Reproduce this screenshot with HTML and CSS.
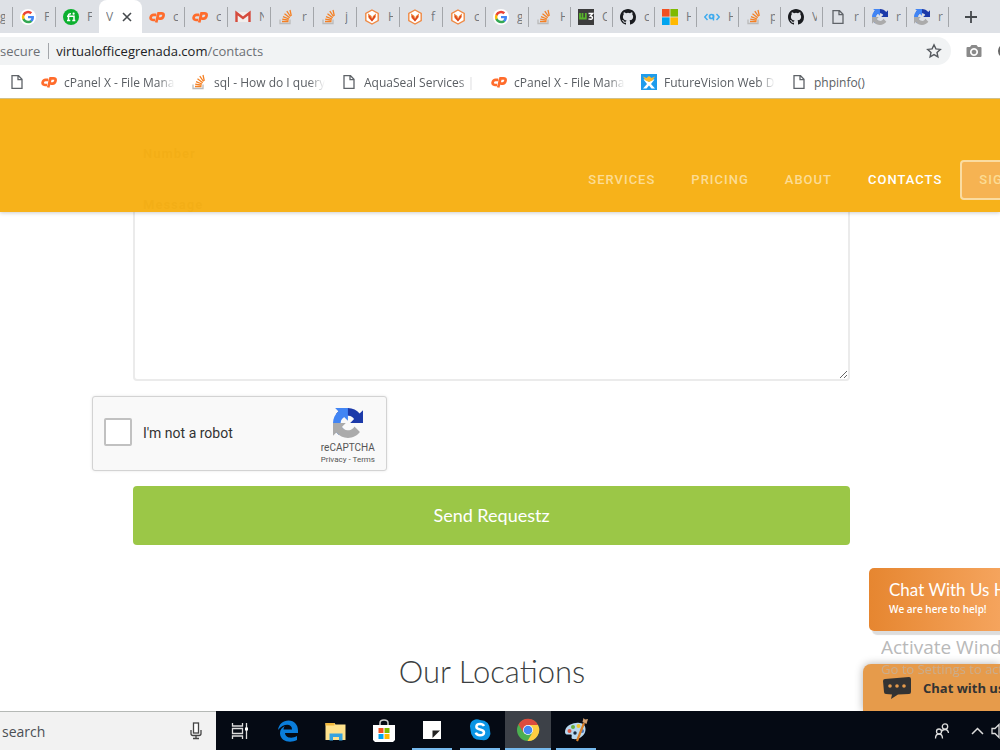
FILE: index.html
```html
<!DOCTYPE html>
<html lang="en">
<head>
<meta charset="utf-8">
<title>Contacts</title>
<link rel="stylesheet" href="styles.css">
</head>
<body>
<svg class="sprite" aria-hidden="true">
  <symbol id="google" viewBox="0 0 18 18"><circle cx="9" cy="9" r="9" fill="#fff"/><g transform="translate(2 2) scale(.78)"><path fill="#4285f4" d="M17.6 9.2c0-.6-.1-1.300-.2-1.800H9v3.500h4.800a4.100 4.100 0 0 1-1.800 2.700v2.300h2.900c1.700-1.600 2.700-3.900 2.700-6.700z"/><path fill="#34a853" d="M9 18c2.400 0 4.500-.8 6-2.200l-3-2.300c-.8.600-1.800.9-3 .9-2.300 0-4.300-1.600-5-3.700H1V13a9 9 0 0 0 8 5z"/><path fill="#fbbc05" d="M4 10.700a5.400 5.400 0 0 1 0-3.400V5H1a9 9 0 0 0 0 8z"/><path fill="#ea4335" d="M9 3.600c1.300 0 2.500.5 3.400 1.300L15 2.300A9 9 0 0 0 1 5l3 2.300c.7-2.100 2.700-3.700 5-3.700z"/></g></symbol>
  <symbol id="fi" viewBox="0 0 16 16"><circle cx="8" cy="8" r="8" fill="#0cb02f"/><path d="M5.500 11.500V6.300q0-1.700 2.500-1.500M4 7.300h7v4.200M4 11.500h3.300M9.300 11.500h3" fill="none" stroke="#fff" stroke-width="1.500"/><circle cx="10.600" cy="4.700" r="1.100" fill="#fff"/></symbol>
  <symbol id="cp" viewBox="0 0 16 16"><path d="M7.300 5.800H4.600Q2.300 5.800 1.700 8.300T4 11H6M7.200 13.500L9.500 4.300h2.900q2.700 0 2.100 2.600t-2.900 2.700H9.500" fill="none" stroke="#ff6c2c" stroke-width="2.700"/></symbol>
  <symbol id="gmail" viewBox="0 0 16 16"><path d="M1 3h14v10H1z" fill="#f2eeec"/><path d="M1.500 13V4L8 9l6.500-5v9" fill="none" stroke="#d54b3d" stroke-width="2.400"/></symbol>
  <symbol id="so" viewBox="0 0 16 16"><path d="M2 10.500v4h10v-4" fill="none" stroke="#bbb" stroke-width="1.300"/><path d="M4 12.500h6.500M4.200 10.200l6.400 1M5 7.600l6 2.400M6.500 4.800l5.200 3.900M8.800 2.200l3.700 5.300M12 1l1.300 5.800" stroke="#f48024" stroke-width="1.300"/></symbol>
  <symbol id="hex" viewBox="0 0 16 16"><path d="M8 1l6.200 3.500v7L8 15l-6.200-3.500v-7z" fill="#fff" stroke="#ef8a45" stroke-width="1.400"/><path d="M4 4.500L7.500 7 8 9.500 9 7l3-2.500-.5 4L8 12.500 4.500 9z" fill="#ee7b2c"/><path d="M5 7l3 4.500L11 7" fill="none" stroke="#d83d25" stroke-width="1.200"/></symbol>
  <symbol id="w3" viewBox="0 0 16 16"><path d="M0 0h16v16H0z" fill="#3c3c3c"/><path d="M2 4v5.500h2.500V4M4.500 9.500H7.800V4" fill="none" stroke="#59b52c" stroke-width="1.800"/><path d="M10.500 4.500h4L12.300 7q2.500.2 2 2.200-.7 1.800-3.800.7" fill="none" stroke="#fff" stroke-width="1.500"/></symbol>
  <symbol id="github" viewBox="0 0 16 16"><path fill="#191b1f" d="M8 0C3.580 0 0 3.580 0 8c0 3.540 2.290 6.530 5.470 7.590.4.070.55-.17.55-.38 0-.19-.01-.82-.01-1.490-2.010.37-2.530-.49-2.690-.94-.09-.23-.48-.94-.82-1.130-.28-.15-.68-.52-.01-.53.63-.01 1.080.58 1.230.82.72 1.210 1.870.87 2.330.66.07-.52.28-.87.51-1.070-1.780-.2-3.640-.89-3.640-3.950 0-.87.31-1.590.82-2.150-.08-.2-.36-1.020.08-2.120 0 0 .67-.21 2.200.82a7.600 7.600 0 0 1 4 0c1.530-1.040 2.200-.82 2.200-.82.44 1.100.16 1.920.08 2.120.51.56.82 1.270.82 2.150 0 3.070-1.870 3.750-3.650 3.950.29.25.54.73.54 1.480 0 1.070-.01 1.930-.01 2.200 0 .21.15.46.55.38A8 8 0 0 0 16 8c0-4.420-3.580-8-8-8z"/></symbol>
  <symbol id="ms" viewBox="0 0 16 16"><path fill="#f25022" d="M0 0h7.600v7.600H0z"/><path fill="#7fba00" d="M8.400 0H16v7.600H8.400z"/><path fill="#00a4ef" d="M0 8.400h7.600V16H0z"/><path fill="#ffb900" d="M8.400 8.400H16V16H8.400z"/></symbol>
  <symbol id="code" viewBox="0 0 16 16"><path d="M3.500 5L.8 8l2.700 3M12.500 5l2.700 3-2.700 3M9.500 5.500v6" fill="none" stroke="#3fabee" stroke-width="1.400"/><circle cx="7.500" cy="7.500" r="2" fill="none" stroke="#3fabee" stroke-width="1.700"/></symbol>
  <symbol id="doc" viewBox="0 0 16 16"><path d="M3 1.700h6.500l3.500 3.500v9.100H3zM9 1.700v4h4" fill="none" stroke="#5f6368" stroke-width="1.300"/></symbol>
  <symbol id="captcha" viewBox="0 0 64 64"><path fill="#1c3aa9" d="M64 31.955l-.033-1.370V4.687l-7.160 7.160C50.948 4.674 42.033.093 32.050.093c-10.400 0-19.622 4.960-25.458 12.640l11.736 11.860a15.550 15.550 0 0 1 4.754-5.334c2.050-1.600 4.952-2.906 8.968-2.906.485 0 .860.057 1.135.163 4.976.393 9.288 3.140 11.828 7.124l-8.307 8.307L64 31.953"/><path fill="#4285f4" d="M31.862.094l-1.370.033H4.594l7.160 7.160C4.580 13.147 0 22.060 0 32.046c0 10.400 4.960 19.622 12.640 25.458L24.500 45.768a15.550 15.550 0 0 1-5.334-4.754c-1.600-2.050-2.906-4.952-2.906-8.968 0-.485.057-.860.163-1.135.393-4.976 3.140-9.288 7.124-11.828l8.307 8.307L31.860.095"/><path fill="#ababab" d="M.001 32.045l.033 1.370v25.898l7.160-7.160c5.860 7.173 14.774 11.754 24.760 11.754 10.400 0 19.622-4.960 25.458-12.640l-11.736-11.860a15.550 15.550 0 0 1-4.754 5.334c-2.050 1.600-4.952 2.906-8.968 2.906-.485 0-.860-.057-1.135-.163-4.976-.393-9.288-3.140-11.828-7.124l8.307-8.307c-10.522.040-22.400.066-27.295-.005"/></symbol>
  <symbol id="wix" viewBox="0 0 16 16"><path d="M0 0h16v16H0z" fill="#1e9cec"/><path d="M2.500 5.500h3L8 8l2.500-2.500h3L10 10l4 4.500h-3.500L8 11.500l-2.500 3H2L6 10z" fill="#fff"/><path d="M2 2.500l3.500 1.500L8 2l2.500 2L14 2.500l-2.500 4L8 8 4.500 6.500z" fill="#fbb829"/></symbol>
  <symbol id="star" viewBox="0 0 16 16"><path d="M8 1.800l1.900 4.100 4.400.5-3.300 3 .9 4.400L8 11.600l-3.900 2.200.9-4.400-3.300-3 4.400-.5z" fill="none" stroke="#55595e" stroke-width="1.400"/></symbol>
  <symbol id="camera" viewBox="0 0 16 16"><path fill="#8a8a8a" fill-rule="evenodd" d="M5.500 2h5L12 4h2.500q1 0 1 1v8q0 1-1 1h-13q-1 0-1-1V5q0-1 1-1H4zM8 5a4 4 0 1 0 .01 0zM8 6.700a2.300 2.300 0 1 1-.01 0z"/></symbol>
</svg>

<div class="tabs">
  <div class="tab tab-first"><span>g</span></div>
  <div class="tab"><svg><use href="#google"/></svg><span>F</span></div>
  <div class="tab before-active"><svg><use href="#fi"/></svg><span>F</span></div>
  <div class="tab active"><span>V</span><button class="close" aria-label="Close tab"><svg viewBox="0 0 10 10"><path d="M1 1l8 8M9 1L1 9" stroke="#45494d" stroke-width="1.600"/></svg></button></div>
  <div class="tab"><svg><use href="#cp"/></svg><span>c</span></div>
  <div class="tab"><svg><use href="#cp"/></svg><span>c</span></div>
  <div class="tab"><svg><use href="#gmail"/></svg><span>N</span></div>
  <div class="tab"><svg><use href="#so"/></svg><span>r</span></div>
  <div class="tab"><svg><use href="#so"/></svg><span>j</span></div>
  <div class="tab"><svg><use href="#hex"/></svg><span>H</span></div>
  <div class="tab"><svg><use href="#hex"/></svg><span>f</span></div>
  <div class="tab"><svg><use href="#hex"/></svg><span>c</span></div>
  <div class="tab"><svg><use href="#google"/></svg><span>g</span></div>
  <div class="tab slim"><svg><use href="#so"/></svg><span>H</span></div>
  <div class="tab slim"><svg><use href="#w3"/></svg><span>C</span></div>
  <div class="tab slim"><svg><use href="#github"/></svg><span>c</span></div>
  <div class="tab slim"><svg><use href="#ms"/></svg><span>H</span></div>
  <div class="tab slim"><svg><use href="#code"/></svg><span>H</span></div>
  <div class="tab slim"><svg><use href="#so"/></svg><span>p</span></div>
  <div class="tab slim"><svg><use href="#github"/></svg><span>V</span></div>
  <div class="tab slim"><svg><use href="#doc"/></svg><span>r</span></div>
  <div class="tab slim"><svg><use href="#captcha"/></svg><span>r</span></div>
  <div class="tab slim"><svg><use href="#captcha"/></svg><span>r</span></div>
  <button class="new-tab" aria-label="New tab"><svg viewBox="0 0 12 12"><path d="M6 0v12M0 6h12" stroke="#45494d" stroke-width="1.800"/></svg></button>
</div>

<div class="toolbar">
  <div class="omnibox"><span class="secure">secure</span><span class="url"><b>virtualofficegrenada.com</b>/contacts</span><svg class="star"><use href="#star"/></svg></div>
  <svg class="camera"><use href="#camera"/></svg>
  <svg class="ext" viewBox="0 0 16 16"><circle cx="8" cy="8" r="7" fill="#666"/></svg>
</div>

<nav class="bookmarks" aria-label="Bookmarks">
  <a class="bookmark" href="#" aria-label="Page"><svg><use href="#doc"/></svg></a>
  <a class="bookmark" href="#"><svg><use href="#cp"/></svg><span class="fade">cPanel X - File Manag</span></a>
  <a class="bookmark" href="#"><svg><use href="#so"/></svg><span class="fade">sql - How do I query</span></a>
  <a class="bookmark" href="#"><svg><use href="#doc"/></svg><span class="fade">AquaSeal Services | W</span></a>
  <a class="bookmark" href="#"><svg><use href="#cp"/></svg><span class="fade">cPanel X - File Manag</span></a>
  <a class="bookmark" href="#"><svg><use href="#wix"/></svg><span class="fade">FutureVision Web De</span></a>
  <a class="bookmark" href="#"><svg><use href="#doc"/></svg><span>phpinfo()</span></a>
</nav>

<main class="page">
  <header class="site-header">
    <nav class="menu">
      <a href="#">SERVICES</a><a href="#">PRICING</a><a href="#">ABOUT</a><a class="current" href="#">CONTACTS</a><a class="sign" href="#">SIGN UP</a>
    </nav>
  </header>
  <form class="form">
    <input class="field" type="text" placeholder="Number" aria-label="Number">
    <textarea class="field message" placeholder="Message" aria-label="Message"></textarea>
    <div class="captcha">
      <input type="checkbox" id="robot"><label for="robot">I'm not a robot</label>
      <div class="brand"><svg><use href="#captcha"/></svg><span>reCAPTCHA</span><small>Privacy - Terms</small></div>
    </div>
    <button class="send" type="button">Send Requestz</button>
  </form>
  <h2 class="locations">Our Locations</h2>

  <aside class="chat-card"><strong>Chat With Us Here</strong><span>We are here to help!</span></aside>
  <button class="chat-bar" type="button"><svg viewBox="0 0 28 22"><path d="M2 2L26 0q2 0 2 2v13q0 2-2 2l-11 .5L8 22l1-4.500-6-.5q-2 0-2-2L0 4q0-2 2-2z" fill="#333"/><g fill="#e69b4b"><circle cx="7" cy="9" r="1.800"/><circle cx="14" cy="9" r="1.800"/><circle cx="21" cy="9" r="1.800"/></g></svg><span>Chat with us</span></button>
  <div class="watermark"><p>Activate Windows</p><small>Go to Settings to activate</small></div>
</main>

<footer class="taskbar">
  <div class="search"><input type="text" placeholder="search" aria-label="search"><svg viewBox="0 0 12 18"><rect x="3.500" y="1" width="5" height="10" fill="#fff" stroke="#444" stroke-width="1.300"/><path d="M1 8v3.500q0 2 2 2h6q2 0 2-2V8M6 13.500V16M3 16.500h6" fill="none" stroke="#444" stroke-width="1.300"/></svg></div>
  <button class="app" aria-label="Task view"><svg viewBox="0 0 24 24"><path d="M4.500 4v3h10V4M4.500 20v-3h10v3M4.500 9.500h10v5h-10zM18.500 4v16" fill="none" stroke="#ddd" stroke-width="1.300"/><path d="M17 8.500h3v3h-3z" fill="#fff"/></svg></button>
  <button class="app" aria-label="Edge"><svg viewBox="0 0 24 24"><path fill="#0a7ddb" d="M2 11C3 5 7 1.500 12.500 1.500c6 0 9.500 4.500 9.500 10V14H9c.2 5 7 6 12 3v4c-7 3.500-16.500 1.500-17-6.500C3.900 10.500 6 8.500 9 7c-1 1-1.500 2.500-1.500 3.500H16C16 4 7 4.500 2 11z"/></svg></button>
  <button class="app" aria-label="Files"><svg viewBox="0 0 24 24"><path d="M1.500 4h9l1 1.500h10V21h-20z" fill="#ffe28c"/><path d="M1.500 4h9v2.500h-9z" fill="#f2b83b"/><path d="M5.500 21.500v-7h13v7h-3.500v-3.500H9v3.500z" fill="#37a3df"/></svg></button>
  <button class="app" aria-label="Store"><svg viewBox="0 0 24 24"><path d="M8 7V4q0-3 4-3t4 3v3" fill="none" stroke="#ccc" stroke-width="1.500"/><path d="M1 6h22v15l-2 2H3l-2-2z" fill="#fff"/><path fill="#f25022" d="M6.500 9h5v5h-5z"/><path fill="#7fba00" d="M12.500 9h5v5h-5z"/><path fill="#00a4ef" d="M6.500 15h5v5h-5z"/><path fill="#ffb900" d="M12.500 15h5v5h-5z"/></svg></button>
  <button class="app open" aria-label="Notes"><svg viewBox="0 0 24 24"><path d="M3 3h18v18H3z" fill="#fff"/><path d="M12.500 12.500H20l-7.500 7.500z" fill="#222"/></svg></button>
  <button class="app open" aria-label="Skype"><svg viewBox="0 0 24 24"><path d="M7 1.500q3-.5 5 .5 10 .5 10 10.500 1 3-.5 6-3 5-7.500 3.500-11 .5-11.500-10Q0 4 7 1.500z" fill="#0a94e4"/><path d="M16 8q-1-2-4-2-3.600 0-3.600 2.700 0 2 3.600 2.700 4 .8 4 3 0 2.800-4 2.800-3.500 0-4.200-2.500" fill="none" stroke="#fff" stroke-width="2.500"/></svg></button>
  <button class="app open focused" aria-label="Chrome"><svg viewBox="0 0 24 24"><circle cx="12" cy="12" r="11" fill="#4caf50"/><path d="M2.500 6.500A11 11 0 0 1 22 7H12L7.500 14.500z" fill="#dd4b3e"/><path d="M22 7A11 11 0 0 1 11.500 23l5-8.500L12 7z" fill="#fecd42"/><circle cx="12" cy="12" r="5" fill="#fff"/><circle cx="12" cy="12" r="4.300" fill="#4587f3"/></svg></button>
  <button class="app open" aria-label="Paint"><svg viewBox="0 0 24 24"><path d="M12 5c6-1 10 2 9.500 7-.5 6-7 10-12.500 9-3-.5 0-4-2-4.500S1 18 1 14C1 9 6 5.500 12 5z" fill="#b8d8f0"/><circle cx="5.500" cy="13" r="2" fill="#e05a45"/><circle cx="9" cy="9" r="2" fill="#67ae40"/><circle cx="14.500" cy="8" r="2" fill="#f0c62e"/><circle cx="11" cy="15" r="1.700" fill="#182c40"/><circle cx="18" cy="13" r="2" fill="#4d76bd"/><path d="M20 5l-7 18" stroke="#d9802a" stroke-width="2.200"/><path d="M18.500 4l1-4 1.500 1.500L24 1l-1.500 5z" fill="#d4a273"/></svg></button>
  <div class="tray">
    <svg viewBox="0 0 16 16"><g fill="none" stroke="#ddd" stroke-width="1.300"><circle cx="11" cy="3.500" r="2.700"/><circle cx="5" cy="8.500" r="2.500"/><path d="M7.500 8.500q1-2 3.500-2 3 0 3.500 3.500M1.500 15.500q0-4.500 3.500-4.500t3.500 4.500"/></g></svg>
    <svg viewBox="0 0 16 16"><path d="M3 11l5.500-5.500L14 11" fill="none" stroke="#ddd" stroke-width="1.500"/></svg>
    <svg viewBox="0 0 16 16"><path d="M1 5.500h3l4-4v13l-4-4H1z" fill="none" stroke="#ddd" stroke-width="1.300"/></svg>
  </div>
</footer>
</body>
</html>
```
FILE: styles.css
```css
* { box-sizing: border-box; }
body { margin: 0; height: 100vh; display: flex; flex-direction: column; overflow: hidden; background: #fff; font-family: "Open Sans", "Noto Sans", sans-serif; }
button { border: 0; padding: 0; background: none; font: inherit; }
a { text-decoration: none; color: inherit; }
svg { flex: none; width: 16px; height: 16px; display: block; }
.sprite { position: absolute; width: 0; height: 0; }

.tabs { flex: none; height: 33px; display: flex; align-items: center; background: #dee1e6; font-size: 12px; color: #75797e; }
.tab { flex: none; width: 43px; height: 20px; padding-left: 7px; display: flex; align-items: center; gap: 8px; border-right: 1px solid #a3a6aa; overflow: hidden; }
.tab span { width: 5px; overflow: hidden; }
.tab.slim { width: 42px; }
.tab-first { width: 13px; padding-left: 0; }
.before-active { border-color: transparent; }
.tab.active { height: 33px; padding-left: 7px; border: 0; border-radius: 8px 8px 0 0; background: #fff; }
.tab.active span { width: 8px; }
.close svg { width: 10px; height: 10px; }
.new-tab { margin-left: 16px; }
.new-tab svg { width: 12px; height: 12px; }

.toolbar { flex: none; height: 35px; display: flex; align-items: center; gap: 15px; overflow: hidden; }
.omnibox { flex: 1; height: 28px; padding-right: 9px; display: flex; align-items: center; border-radius: 0 14px 14px 0; background: #f1f3f4; font-size: 13px; color: #6c7075; white-space: nowrap; }
.secure { padding-right: 8px; margin-right: 7px; border-right: 1px solid #a3a6aa; line-height: 16px; }
.url b { font-weight: 400; color: #202124; }
.star { margin-left: auto; }
.ext { margin-right: -13px; }

.bookmarks { flex: none; height: 31px; padding: 0 0 2px 9px; display: flex; align-items: center; gap: 16px; border-bottom: 1px solid #d0c08a; font-size: 12px; color: #5a5e63; }
.bookmark { flex: none; display: flex; align-items: center; gap: 7px; white-space: nowrap; }
.fade { width: 111px; overflow: hidden; -webkit-mask-image: linear-gradient(to right, #000 85%, transparent); mask-image: linear-gradient(to right, #000 85%, transparent); }

.page { flex: 1; position: relative; overflow: hidden; }
.site-header { position: absolute; z-index: 1; inset: 0 0 auto; height: 113px; padding-top: 61px; background: rgba(247, 176, 20, .975); box-shadow: 0 1px 4px rgba(0, 0, 0, .2); }
.menu { display: flex; justify-content: flex-end; align-items: center; gap: 36px; margin-right: -55px; font: 500 13px/16px Roboto, sans-serif; letter-spacing: 1px; color: #fcdc94; }
.menu .current { color: #fff; }
.sign { margin-left: -18px; padding: 10px 17px; border: 2px solid #fbdca0; border-radius: 4px; background: #f6b352; }

.form { padding: 33px 150px 0 133px; display: flex; flex-direction: column; gap: 15px; }
.field { height: 43px; padding: 8px; border: 2px solid #ebebeb; border-radius: 4px; font: 700 13px/17px Roboto, sans-serif; letter-spacing: 1px; }
.field::placeholder { color: #555; opacity: 1; }
.message { height: 191px; padding-top: 4px; resize: vertical; }
.captcha { width: 295px; height: 75px; margin-left: -41px; padding: 0 11px; display: flex; align-items: center; gap: 11px; border: 1px solid #d3d3d3; border-radius: 3px; background: #f9f9f9; box-shadow: 0 0 3px rgba(0, 0, 0, .1); font-family: Roboto, sans-serif; }
.captcha input { appearance: none; width: 28px; height: 28px; margin: 0 0 4px; border: 2px solid #c1c1c1; border-radius: 2px; background: #fff; }
.captcha label { padding-bottom: 2px; font-size: 14px; color: #333; }
.brand { margin-left: auto; padding-top: 6px; display: flex; flex-direction: column; align-items: center; color: #555; font-size: 10px; line-height: 12px; }
.brand svg { width: 30px; height: 30px; margin-bottom: 4px; }
.brand small { font-size: 8px; }
.send { height: 59px; padding-bottom: 2px; border-radius: 4px; background: #9bc747; color: #fff; font: 18px Lato, sans-serif; }
.locations { margin: 106px 16px 0 0; text-align: center; font: 300 31px/40px Lato, sans-serif; color: #3c3f42; }

.chat-card { position: absolute; right: 0; bottom: 80px; width: 131px; height: 63px; padding: 12px 0 0 20px; display: flex; flex-direction: column; border-radius: 5px 0 0 5px; background: linear-gradient(to right, #e68630, #f5a45d); box-shadow: 3px 4px 1px #ddd; color: #fff; white-space: nowrap; overflow: hidden; }
.chat-card strong { font: 17px/20px Lato, sans-serif; }
.chat-card span { font-size: 10px; line-height: 18px; font-weight: 600; }
.chat-bar { position: absolute; right: 0; bottom: 0; width: 137px; height: 47px; padding-left: 20px; display: flex; align-items: center; gap: 12px; border-radius: 8px 0 0 0; background: #e69b4b; box-shadow: 0 0 8px rgba(0, 0, 0, .3); color: #333; font: 700 13px "Open Sans", sans-serif; white-space: nowrap; overflow: hidden; }
.chat-bar svg { width: 28px; height: 22px; }
.watermark { position: absolute; right: 0; bottom: 32px; width: 119px; color: #b9b9b9; white-space: nowrap; overflow: hidden; pointer-events: none; }
.watermark p { margin: 0; font-size: 19px; line-height: 24px; }
.watermark small { display: block; font-size: 13px; line-height: 20px; opacity: .6; }

.taskbar { flex: none; height: 39px; display: flex; background: #050a14; }
.search { flex: none; width: 216px; padding: 0 13px 0 2px; display: flex; align-items: center; border-top: 1px solid #b5b9b6; background: #f2f2f2; }
.search input { flex: 1; min-width: 0; padding: 0; border: 0; background: none; font: 14px "Open Sans", sans-serif; }
.search input::placeholder { color: #4b4f54; opacity: 1; }
.search svg { width: 14px; height: 18px; }
.app { flex: none; width: 48px; display: flex; align-items: center; justify-content: center; }
.app svg { width: 24px; height: 24px; }
.open { width: 40px; margin: 0 4px; border-bottom: 2px solid #76b9ed; }
.focused { width: 46px; margin: 0 1px; background: #3d4148; }
.tray { margin-left: auto; margin-right: -7px; display: flex; align-items: center; gap: 19px; }
.tray svg:last-child { margin-left: -13px; }
```
